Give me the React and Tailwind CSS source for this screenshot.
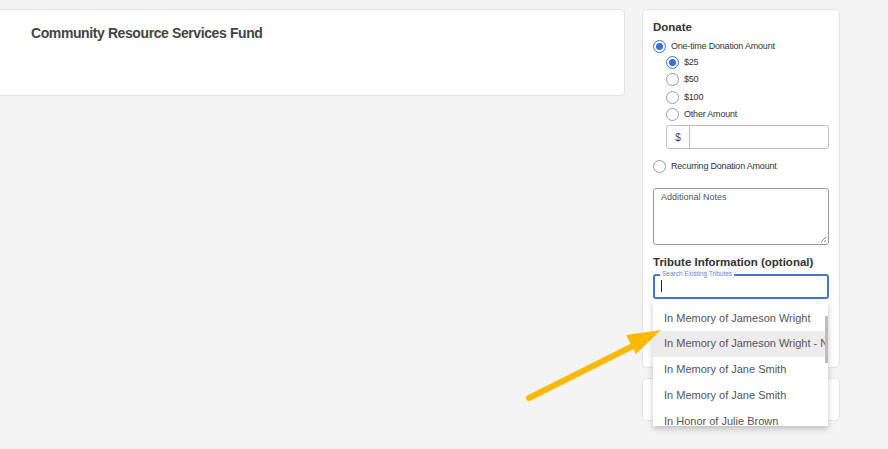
import React from 'react';

const tributes = [
	'In Memory of Jameson Wright',
	'In Memory of Jameson Wright - Note',
	'In Memory of Jane Smith',
	'In Memory of Jane Smith',
	'In Honor of Julie Brown',
	'In Honor of Julie Brown',
];

function Radio({ checked }) {
	return (
		<span
			className={
				'flex h-[13px] w-[13px] shrink-0 items-center justify-center rounded-full border bg-white ' +
				(checked ? 'border-[#3a6fd8]' : 'border-[#9a9a9a]')
			}
		>
			{checked && <span className="h-[7px] w-[7px] rounded-full bg-[#3a6fd8]" />}
		</span>
	);
}

function Option({ checked, label, className = '' }) {
	return (
		<label className={'flex items-center gap-[5px] ' + className}>
			<Radio checked={checked} />
			<span className="text-[9px] leading-none tracking-[-0.2px] text-[#333]">{label}</span>
		</label>
	);
}

export default function App() {
	return (
		<div className="relative h-[449px] w-[888px] overflow-hidden bg-[#f4f4f4] font-['Liberation_Sans',Arial,sans-serif]">
			<div className="flex items-start gap-[17px] pt-[9px]">
				{/* fund card */}
				<div className="-ml-[6px] h-[87px] w-[631px] rounded-[5px] border border-[#e2e2e2] bg-white pl-[36px] pt-[13px]">
					<h2 className="text-[14px] font-bold tracking-[-0.4px] text-[#444]">Community Resource Services Fund</h2>
				</div>

				{/* donate column */}
				<div className="flex w-[198px] flex-col gap-[10px]">
					<div className="relative h-[359px] rounded-[5px] border border-[#e2e2e2] bg-white px-[10px] pt-[10px]">
						<div className="text-[11.5px] font-semibold leading-[14px] text-[#333]">Donate</div>
						<Option checked label="One-time Donation Amount" className="mt-[6px]" />
						<div className="ml-[13px] mt-[3px] flex flex-col gap-[4.3px]">
							<Option checked label="$25" />
							<Option label="$50" />
							<Option label="$100" />
							<Option label="Other Amount" />
							<div className="flex h-[24px] rounded-[3px] border border-[#bdbdbd]">
								<span className="flex w-[23px] items-center justify-center border-r border-[#bdbdbd] text-[10px] text-[#444]">$</span>
							</div>
						</div>
						<Option label="Recurring Donation Amount" className="mt-[11px]" />
						<div className="relative mt-[15px] h-[57px] rounded-[3px] border border-[#9e9e9e] px-[7px] pt-[3px]">
							<div className="text-[9px] leading-[11px] text-[#555]">Additional Notes</div>
							<svg className="absolute bottom-[1px] right-[1px]" width="7" height="7" viewBox="0 0 7 7">
								<path d="M6 1 L1 6 M6 4 L4 6" stroke="#666" strokeWidth="0.8" />
							</svg>
						</div>
						<div className="mt-[10px] text-[11.5px] font-semibold leading-[14px] text-[#333]">Tribute Information (optional)</div>
						<div className="relative mt-[5px] h-[25px] rounded-[3px] border-2 border-[#4a74c9] bg-white">
							<span className="absolute -top-[6px] left-[5px] bg-white px-[2px] text-[6.5px] leading-[8px] text-[#6a7fd8]">
								Search Existing Tributes
							</span>
							<span className="absolute left-[6px] top-[4px] h-[12px] w-px bg-[#222]" />
						</div>

						{/* autocomplete list */}
						<div className="absolute left-[10px] top-[290px] z-10 h-[126px] w-[175px] overflow-hidden bg-white pt-[5px] shadow-[0_3px_6px_rgba(0,0,0,0.22)]">
							{tributes.map((t, i) => (
								<div
									key={i}
									className={
										'flex h-[25.8px] items-center whitespace-nowrap pl-[11px] text-[11px] text-[#555] ' +
										(i === 1 ? 'bg-[#ececec]' : '')
									}
								>
									{t}
								</div>
							))}
							<span className="absolute right-0 top-[16px] h-[47px] w-[3px] bg-[#bdbdbd]" />
						</div>
					</div>
					<div className="h-[43px] rounded-[5px] border border-[#e2e2e2] bg-white" />
				</div>
			</div>

			{/* annotation arrow */}
			<svg className="pointer-events-none absolute left-0 top-0 z-20" width="888" height="449">
				<line x1="529" y1="398" x2="637" y2="344" stroke="#fbb901" strokeWidth="6" strokeLinecap="round" />
				<polygon points="661,330 626,335 636,354" fill="#fbb901" />
			</svg>
		</div>
	);
}
